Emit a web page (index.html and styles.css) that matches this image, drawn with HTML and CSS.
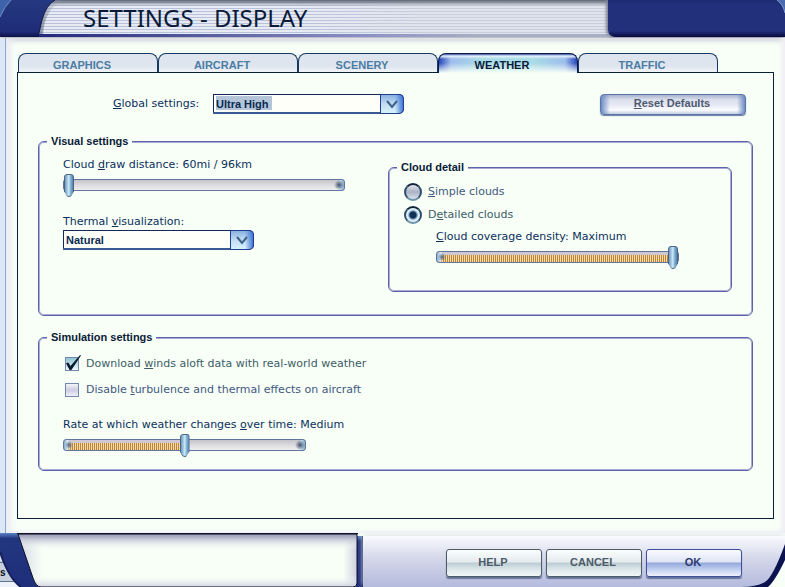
FILE: index.html
```
<!DOCTYPE html>
<html lang="en">

<head>
    <meta charset="UTF-8">
    <meta name="viewport" content="width=device-width, initial-scale=1.0">
    <title>Settings - Display</title>
    <link rel="stylesheet" href="styles.css">
</head>

<body>
    <header class="header">
        <svg class="header-corner" width="64" height="37" viewBox="0 0 64 37" aria-hidden="true">
            <defs>
                <linearGradient id="cornerBlue" x1="0" y1="0" x2="0" y2="1">
                    <stop offset="0" stop-color="#24387f" />
                    <stop offset="0.85" stop-color="#1f2c78" />
                    <stop offset="1" stop-color="#0c1248" />
                </linearGradient>
                <linearGradient id="cornerShade" x1="0" y1="0" x2="1" y2="0">
                    <stop offset="0" stop-color="#3c4358" stop-opacity="0.6" />
                    <stop offset="1" stop-color="#b4bccb" stop-opacity="0" />
                </linearGradient>
            </defs>
            <path d="M53 0 Q44 7 41 23 L38 34 L43 34 Q45 8 64 0 Z" fill="url(#cornerShade)" />
            <path d="M0 0 H55 Q46 5 42 20 L38 37 H0 Z" fill="url(#cornerBlue)" />
            <path d="M55 0 Q46 5 42 20 L38 37" fill="none" stroke="#10184a" />
            <path d="M0 0 H11 Q4 7 0 17 Z" fill="#3f62ab" />
            <path d="M11 0 Q4 7 0 17" fill="none" stroke="#6f93cd" />
        </svg>
        <h1>SETTINGS - DISPLAY</h1>
        <div class="header-cap">
            <svg width="8" height="13" viewBox="0 0 8 13" aria-hidden="true">
                <path d="M0 0 Q6 4 8 13 V0 Z" fill="#4a6cae" />
                <path d="M0 0 Q6 4 8 13" fill="none" stroke="#7d9cd0" />
            </svg>
        </div>
    </header>

    <main class="main">
        <div class="tabs" role="tablist">
            <button type="button" class="tab" role="tab">GRAPHICS</button>
            <button type="button" class="tab" role="tab">AIRCRAFT</button>
            <button type="button" class="tab" role="tab">SCENERY</button>
            <button type="button" class="tab active" role="tab" aria-selected="true">WEATHER</button>
            <button type="button" class="tab" role="tab">TRAFFIC</button>
        </div>

        <form class="panel">
            <div class="top-row">
                <label for="globalSettings" class="global-label"><u>G</u>lobal settings:</label>
                <div class="dropdown">
                    <select id="globalSettings" class="highlighted">
                        <option>Ultra High</option>
                    </select>
                    <span class="arrow"><svg width="12" height="9" viewBox="0 0 12 9"><path d="M1 1 L6 7 L11 1" fill="none" stroke="#3c6288" stroke-width="2" /></svg></span>
                </div>
                <button type="button" class="reset"><u>R</u>eset Defaults</button>
            </div>

            <fieldset>
                <legend>Visual settings</legend>
                <div class="visual">
                    <div class="visual-left">
                        <label for="cloudDistance">Cloud <u>d</u>raw distance: 60mi / 96km</label>
                        <input type="range" id="cloudDistance" class="wide" min="0" max="100" value="0" style="--fill: 0%">
                        <label for="thermal" class="thermal-label">Thermal <u>v</u>isualization:</label>
                        <div class="dropdown">
                            <select id="thermal">
                                <option>Natural</option>
                            </select>
                            <span class="arrow"><svg width="12" height="9" viewBox="0 0 12 9"><path d="M1 1 L6 7 L11 1" fill="none" stroke="#3c6288" stroke-width="2" /></svg></span>
                        </div>
                    </div>

                    <fieldset>
                        <legend>Cloud detail</legend>
                        <div class="clouds">
                            <label class="choice"><input type="radio" name="clouds"><span><u>S</u>imple clouds</span></label>
                            <label class="choice on"><input type="radio" name="clouds" checked><span>D<u>e</u>tailed clouds</span></label>
                            <div class="density">
                                <label for="density"><u>C</u>loud coverage density: Maximum</label>
                                <input type="range" id="density" min="0" max="100" value="100" style="--fill: 100%">
                            </div>
                        </div>
                    </fieldset>
                </div>
            </fieldset>

            <fieldset>
                <legend>Simulation settings</legend>
                <div class="simulation">
                    <label class="check on"><input type="checkbox" checked><span>Download <u>w</u>inds aloft data with real-world weather</span></label>
                    <label class="check"><input type="checkbox"><span>Disable <u>t</u>urbulence and thermal effects on aircraft</span></label>
                    <label for="rate" class="rate-label">Rate at which weather changes <u>o</u>ver time: Medium</label>
                    <input type="range" id="rate" min="0" max="100" value="50" style="--fill: 50%">
                </div>
            </fieldset>
        </form>
    </main>

    <footer class="footer">
        <svg class="tray" width="363" height="54" viewBox="0 0 363 54" aria-hidden="true">
            <defs>
                <linearGradient id="trayTop" x1="0" y1="0" x2="0" y2="1">
                    <stop offset="0" stop-color="#9294ae" />
                    <stop offset="0.1" stop-color="#c6c8d8" />
                    <stop offset="0.3" stop-color="#f7fff7" stop-opacity="0" />
                    <stop offset="0.78" stop-color="#f7fff7" stop-opacity="0" />
                    <stop offset="1" stop-color="#cfcfdf" />
                </linearGradient>
                <linearGradient id="traySide" x1="0" y1="0" x2="1" y2="0">
                    <stop offset="0" stop-color="#d6d6e4" />
                    <stop offset="0.07" stop-color="#f7fff7" />
                    <stop offset="0.96" stop-color="#f7fff7" />
                    <stop offset="1" stop-color="#cfcfdf" />
                </linearGradient>
                <linearGradient id="trayBlue" x1="0" y1="0" x2="0" y2="1">
                    <stop offset="0" stop-color="#5b83c4" />
                    <stop offset="0.1" stop-color="#22367f" />
                    <stop offset="1" stop-color="#1f2e7a" />
                </linearGradient>
            </defs>
            <rect y="0" width="20" height="28" fill="#d9e6f5" />
            <rect y="28" width="20" height="20" fill="#c9cfdc" />
            <path d="M0 29.500 H14 M0 48.500 H20" stroke="#5f7392" />
            <rect y="49" width="22" height="5" fill="#eef2fa" />
            <text x="0" y="43" class="tray-text">s</text>
            <path d="M0 0 H24 L44 54 H20 Q10 46 0 20 Z" fill="url(#trayBlue)" />
            <path d="M0 19 Q9 46 21 54" fill="none" stroke="#141f5c" stroke-width="2" />
            <rect x="356" y="3" width="7" height="51" fill="url(#trayBlue)" />
            <path d="M18 1 H357 V50 Q357 54 353 54 H41 Q36 54 33 45 Z" fill="url(#traySide)" />
            <path d="M18 1 H357 V50 Q357 54 353 54 H41 Q36 54 33 45 Z" fill="url(#trayTop)" stroke="#0b1026" />
            <path d="M17 0.500 H358" stroke="#0b1026" />
            <path d="M362.500 3 V54" stroke="#0b1140" />
        </svg>
        <div class="footer-bar">
            <button type="button" class="big-button">HELP</button>
            <button type="button" class="big-button">CANCEL</button>
            <button type="button" class="big-button ok">OK</button>
        </div>
        <svg class="footer-corner" width="48" height="51" viewBox="0 0 48 51" aria-hidden="true">
            <path d="M48 8 Q36 43 25 49 L22 51 H48 Z" fill="#f7fff7" />
            <path d="M48 8 Q36 41 28 46 Q20 51 4 51 H31 Q38 45 48 24 Z" fill="#0b124f" />
        </svg>
    </footer>
</body>

</html>
```
FILE: styles.css
```
* {
    box-sizing: border-box;
}

body {
    margin: 0;
    min-height: 100vh;
    display: flex;
    flex-direction: column;
    background-color: #f7fff7;
    color: #0c2f5c;
    font-family: "DejaVu Sans", Verdana, sans-serif;
    font-size: 11px;
    line-height: 16px;
}

button,
select {
    font-family: "Liberation Sans", Arial, sans-serif;
    font-size: 11px;
    font-weight: bold;
}

/* header */
.header {
    display: flex;
    height: 37px;
    margin-bottom: 1px;
    background: linear-gradient(to right, #22297c 40px, #8c92c6 370px, #a9afc2 480px) no-repeat bottom / 100% 3px,
        linear-gradient(#5d6474, rgba(160, 168, 184, 0) 6px),
        linear-gradient(to right, rgba(255, 255, 255, 0) 300px, rgba(215, 219, 226, 0.5) 420px),
        repeating-linear-gradient(#e8ebf4 0 2px, #b7c1d9 2px 3px);
    box-shadow: 0 2px 6px #a0a0b2;
}

.header-corner {
    flex: none;
}

.header h1 {
    flex: 1;
    margin: 0;
    padding-left: 19px;
    color: #0a1a38;
    font-family: "Noto Sans", sans-serif;
    font-size: 24px;
    font-weight: normal;
    line-height: 36px;
    white-space: nowrap;
}

.header-cap {
    display: flex;
    justify-content: flex-end;
    flex: 0 0 177px;
    border-bottom-left-radius: 7px;
    background: linear-gradient(#1b2a70, #22307b 4px, #22307b 31px, #060b3c 37px);
    box-shadow: -2px 0 3px #7d8393;
}

/* tabs and panel */
.main {
    flex: 1;
    display: flex;
    flex-direction: column;
    padding: 15px 11px 14px 12px;
    border-left: 5px solid #dbe7f5;
    box-shadow: inset 1px 0 0 #86abd2, inset 6px 0 6px #ecebf2, inset -4px 0 4px #f2eff5;
}

.tabs {
    display: flex;
    padding-left: 1px;
}

.tab {
    width: 140px;
    height: 19px;
    padding: 3px 12px 0 0;
    border: 1px solid #123a63;
    border-bottom: 0;
    border-radius: 8px 8px 0 0;
    background: linear-gradient(#dfe5ef 12px, #f1f4f8);
    color: #4b7da3;
}

.tab.active {
    position: relative;
    height: 20px;
    margin-bottom: -1px;
    padding-bottom: 1px;
    border-color: #0a1d48;
    background: linear-gradient(#2c48a0 0, #e6f2fc 2px, rgba(230, 242, 252, 0) 5px, rgba(247, 255, 247, 0) 9px, #f7fff7 19px),
        linear-gradient(to right, #2444bb, #9fbdec 12px, #a8dce6 44px, #a8dce6 94px, #9fbdec 126px, #2444bb);
    color: #0a1a38;
}

.panel {
    flex: 1;
    padding: 20px;
    border: 1px solid #0a2038;
}

.top-row {
    display: flex;
    align-items: center;
    height: 22px;
    margin-bottom: 19px;
    padding: 0 7px 0 75px;
}

.global-label {
    flex: 0 0 100px;
}

.reset {
    width: 146px;
    height: 21px;
    margin-left: auto;
    padding: 0 2px 2px 0;
    border: 1px solid #5a76a8;
    border-radius: 4px;
    background: linear-gradient(to right, #6d8cc4, rgba(255, 255, 255, 0) 9px, rgba(255, 255, 255, 0) 136px, #6d8cc4),
        linear-gradient(#a9b3ce, #dde1ee 5px, #e4e6f2 9px, #fbfcff 15px, #c3cde2);
    box-shadow: 0 1px 1px #6b7ba2;
    color: #4d5a70;
}

fieldset {
    min-width: 0;
    margin: 0;
    padding: 0 8px;
    border: 1px solid #5e62a8;
    border-radius: 6px;
    box-shadow: inset 0 0 0 1px #a9acd4;
}

.panel > fieldset + fieldset {
    margin-top: 14px;
}

legend {
    padding: 0 4px;
    background-color: #f7fff7;
    color: #0a1a38;
    font-family: "Liberation Sans", Arial, sans-serif;
    font-weight: bold;
    line-height: 14px;
}

.visual {
    display: grid;
    grid-template-columns: 325fr 344fr;
    align-items: start;
    padding: 12px 12px 23px 16px;
}

.visual-left {
    display: flex;
    flex-direction: column;
    align-items: flex-start;
    margin-top: -3px;
}

.thermal-label {
    margin-top: 17px;
}

.clouds {
    padding: 6px 0 22px 7px;
}

.density {
    display: flex;
    flex-direction: column;
    padding: 3px 0 0 32px;
}

.simulation {
    display: flex;
    flex-direction: column;
    align-items: flex-start;
    padding: 7px 16px 13px;
}

.rate-label {
    margin-top: 14px;
}

/* drop-downs */
.dropdown {
    position: relative;
    width: 191px;
    height: 20px;
}

select {
    display: block;
    appearance: none;
    width: 100%;
    height: 100%;
    padding: 0 26px 0 2px;
    border: 1px solid #12295a;
    border-bottom: 2px solid #3a5a96;
    border-radius: 0 5px 5px 0;
    background-color: #fffffa;
    color: #0a2a50;
}

select.highlighted {
    background-image: linear-gradient(#b4c5da, #b4c5da);
    background-repeat: no-repeat;
    background-position: 2px 1px;
    background-size: 56px 14px;
}

.arrow {
    position: absolute;
    top: 0;
    right: 0;
    width: 24px;
    height: 20px;
    display: flex;
    align-items: center;
    justify-content: center;
    border: 1px solid #1f3f8f;
    border-radius: 0 5px 5px 0;
    background: linear-gradient(to right, rgba(255, 255, 255, 0) 14px, #3f78d8),
        linear-gradient(#8ab2e2, #c4dcf2 50%, #d8f2fc);
    pointer-events: none;
}

/* sliders */
input[type="range"] {
    appearance: none;
    width: 243px;
    height: 24px;
    margin: 0;
    background: none;
}

input[type="range"].wide {
    width: 282px;
}

input[type="range"]::-webkit-slider-runnable-track {
    height: 12px;
    border: 1px solid #62759c;
    border-radius: 3px;
    background: radial-gradient(circle at 5px 5px, #50698a, rgba(120, 130, 150, 0) 4px) no-repeat left / 9px 100%,
        linear-gradient(to right, #8ab0cc, #e0f2fa 4px, rgba(224, 242, 250, 0) 5px) no-repeat left / 9px 100%,
        radial-gradient(circle at 5px 5px, #40506a, rgba(120, 130, 150, 0) 5px) no-repeat right / 10px 100%,
        linear-gradient(to left, #8ab0cc, #c4e2f2 4px, rgba(196, 226, 242, 0) 5px) no-repeat right / 10px 100%,
        linear-gradient(#cfc8d2 3px, rgba(0, 0, 0, 0) 3px) no-repeat left / var(--fill) 100%,
        repeating-linear-gradient(to right, #c9831c 0 1px, #ecdcc4 1px 2px) no-repeat left / var(--fill) 100%,
        linear-gradient(#c3c3c9, #dcdce0 5px, #eeeef0);
}

input[type="range"]::-webkit-slider-thumb {
    appearance: none;
    width: 10px;
    height: 23px;
    margin-top: -6px;
    border: 1px solid #4a6484;
    border-radius: 3px 3px 5px 5px;
    background: linear-gradient(to right, #6f96be, #d0eefa 4px, #8fc0de 5px, #5880ac);
    clip-path: polygon(0 0, 100% 0, 100% 75%, 65% 100%, 35% 100%, 0 75%);
}

/* radios and checkboxes */
.choice,
.check {
    display: flex;
    align-items: center;
    color: #43587f;
}

.choice {
    height: 23px;
    gap: 6px;
}

.check {
    height: 26px;
    padding-left: 2px;
    gap: 7px;
}

.choice.on,
.check.on {
    color: #3d5c66;
}

input[type="radio"] {
    appearance: none;
    width: 18px;
    height: 18px;
    margin: 0;
    border: 2px solid #2f4d6c;
    border-top-color: #10233c;
    border-bottom-color: #6c93aa;
    border-radius: 50%;
    background: linear-gradient(#e2e5ec, #a9b1c4 50%, #dce2ec);
}

input[type="radio"]:checked {
    background: radial-gradient(circle, #123258 3px, #c6e4f4 5px, #f2faff 7px);
}

input[type="checkbox"] {
    appearance: none;
    position: relative;
    width: 14px;
    height: 14px;
    margin: 0;
    border: 1px solid #7488b2;
    background: linear-gradient(#f4f6fb, #c9cde0 50%, #f0f2fa);
}

input[type="checkbox"]:checked {
    background: linear-gradient(#8fc4d2, #f0f8fa);
}

input[type="checkbox"]:checked::before {
    content: "";
    position: absolute;
    left: 0;
    top: -3px;
    width: 15px;
    height: 15px;
    background-color: #0a1a30;
    clip-path: polygon(0 55%, 16% 50%, 30% 74%, 94% 0, 100% 4%, 36% 100%, 24% 100%);
}

/* footer */
.footer {
    position: relative;
    display: flex;
    align-items: flex-end;
    height: 54px;
}

.tray {
    flex: none;
}

.tray-text {
    font-family: "Liberation Sans", Arial, sans-serif;
    font-size: 10px;
    font-weight: bold;
    fill: #0a1020;
}

.footer-bar {
    flex: 1;
    display: flex;
    justify-content: flex-end;
    align-items: flex-start;
    gap: 4px;
    height: 51px;
    padding: 13px 43px 0 0;
    background: linear-gradient(#fafbfe, #d5d8ea 22px, #b3badd);
    box-shadow: 0 -2px 5px #e6e8ec;
}

.footer-corner {
    position: absolute;
    right: 0;
    bottom: 0;
    pointer-events: none;
}

.big-button {
    width: 96px;
    height: 28px;
    padding: 0 2px 2px 0;
    border: 1px solid #4b5b68;
    border-radius: 3px;
    background: linear-gradient(#fbfdfd, #e4ebee 12px, #bccdd2 13px, #dfe9ec 20px, #f2f7f8);
    box-shadow: 0 2px 1px #66759a;
    color: #4d5a68;
}

.big-button.ok {
    border-color: #3d4f9c;
    background: linear-gradient(#fafbff, #dfe4f6 12px, #94a9da 13px, #c4d2f0 20px, #eef2fc);
    color: #2c3a6e;
}
```
